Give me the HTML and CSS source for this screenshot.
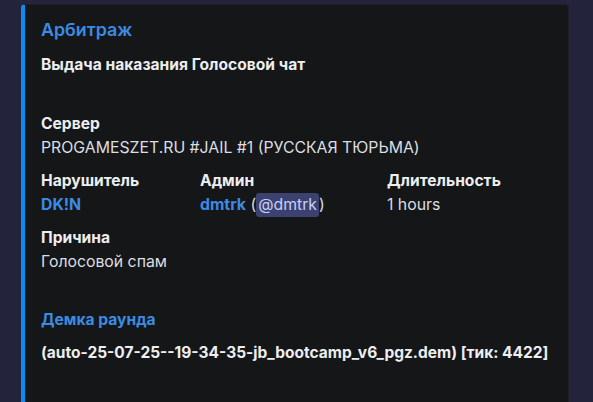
FILE: index.html
```html
<!DOCTYPE html>
<html lang="ru">
<head>
<meta charset="utf-8">
<link rel="stylesheet" href="styles.css">
</head>
<body>
<div class="embed">
  <div class="author">Арбитраж</div>
  <div class="title">Выдача наказания Голосовой чат</div>
  <div class="fields">
    <div class="field full">
      <div class="name">Сервер</div>
      <div class="value">PROGAMESZET.RU #JAIL #1 (РУССКАЯ ТЮРЬМА)</div>
    </div>
    <div class="field">
      <div class="name">Нарушитель</div>
      <div class="value"><span class="link">DK!N</span></div>
    </div>
    <div class="field">
      <div class="name">Админ</div>
      <div class="value"><span class="link">dmtrk</span> (<span class="mention">@dmtrk</span>)</div>
    </div>
    <div class="field">
      <div class="name">Длительность</div>
      <div class="value">1 hours</div>
    </div>
    <div class="field full">
      <div class="name">Причина</div>
      <div class="value">Голосовой спам</div>
    </div>
  </div>
  <div class="demo-title">Демка раунда</div>
  <div class="demo">(auto-25-07-25--19-34-35-jb_bootcamp_v6_pgz.dem) [тик: 4422]</div>
</div>
</body>
</html>
```

FILE: styles.css
```css
html, body {
  margin: 0;
  padding: 0;
  background: #23243b;
  height: 402px;
  overflow: hidden;
}
body {
  font-family: Inter, "Noto Sans", sans-serif;
  color: #dbdee1;
}
.embed {
  margin: 4px 0 0 21px;
  width: 548px;
  height: 398px;
  background: #151618;
  border-left: 4px solid #0b8cf5;
  border-top: 1px solid #202126;
  border-right: 1px solid #202126;
  border-radius: 4px 4px 0 0;
  padding: 14px 16px 0 16px;
  box-sizing: border-box;
  overflow: hidden;
}
.author {
  font-size: 17.8px;
  font-weight: 600;
  line-height: 22px;
  color: #3b8be3;
}
.title {
  margin-top: 14px;
  font-size: 15.6px;
  font-weight: 700;
  line-height: 20px;
  color: #eceef0;
}
.fields {
  margin-top: 37px;
  display: grid;
  grid-template-columns: 159px 187px auto;
  row-gap: 9px;
}
.field.full {
  grid-column: 1 / -1;
}
.name {
  font-size: 15.6px;
  font-weight: 700;
  line-height: 24px;
  color: #eceef0;
}
.value {
  font-size: 15.8px;
  font-weight: 400;
  line-height: 24px;
  color: #dbdee1;
}
.link {
  color: #3b8be3;
  font-weight: 700;
}
.mention {
  display: inline-block;
  background: #3c4270;
  color: #c9cdfb;
  border-radius: 3px;
  padding: 0 2px;
  line-height: 24px;
}
.demo-title {
  margin-top: 34px;
  font-size: 15.6px;
  font-weight: 700;
  line-height: 24px;
  color: #3b8be3;
}
.demo {
  margin-top: 9px;
  font-size: 15.5px;
  font-weight: 700;
  line-height: 24px;
  color: #eceef0;
}
```
